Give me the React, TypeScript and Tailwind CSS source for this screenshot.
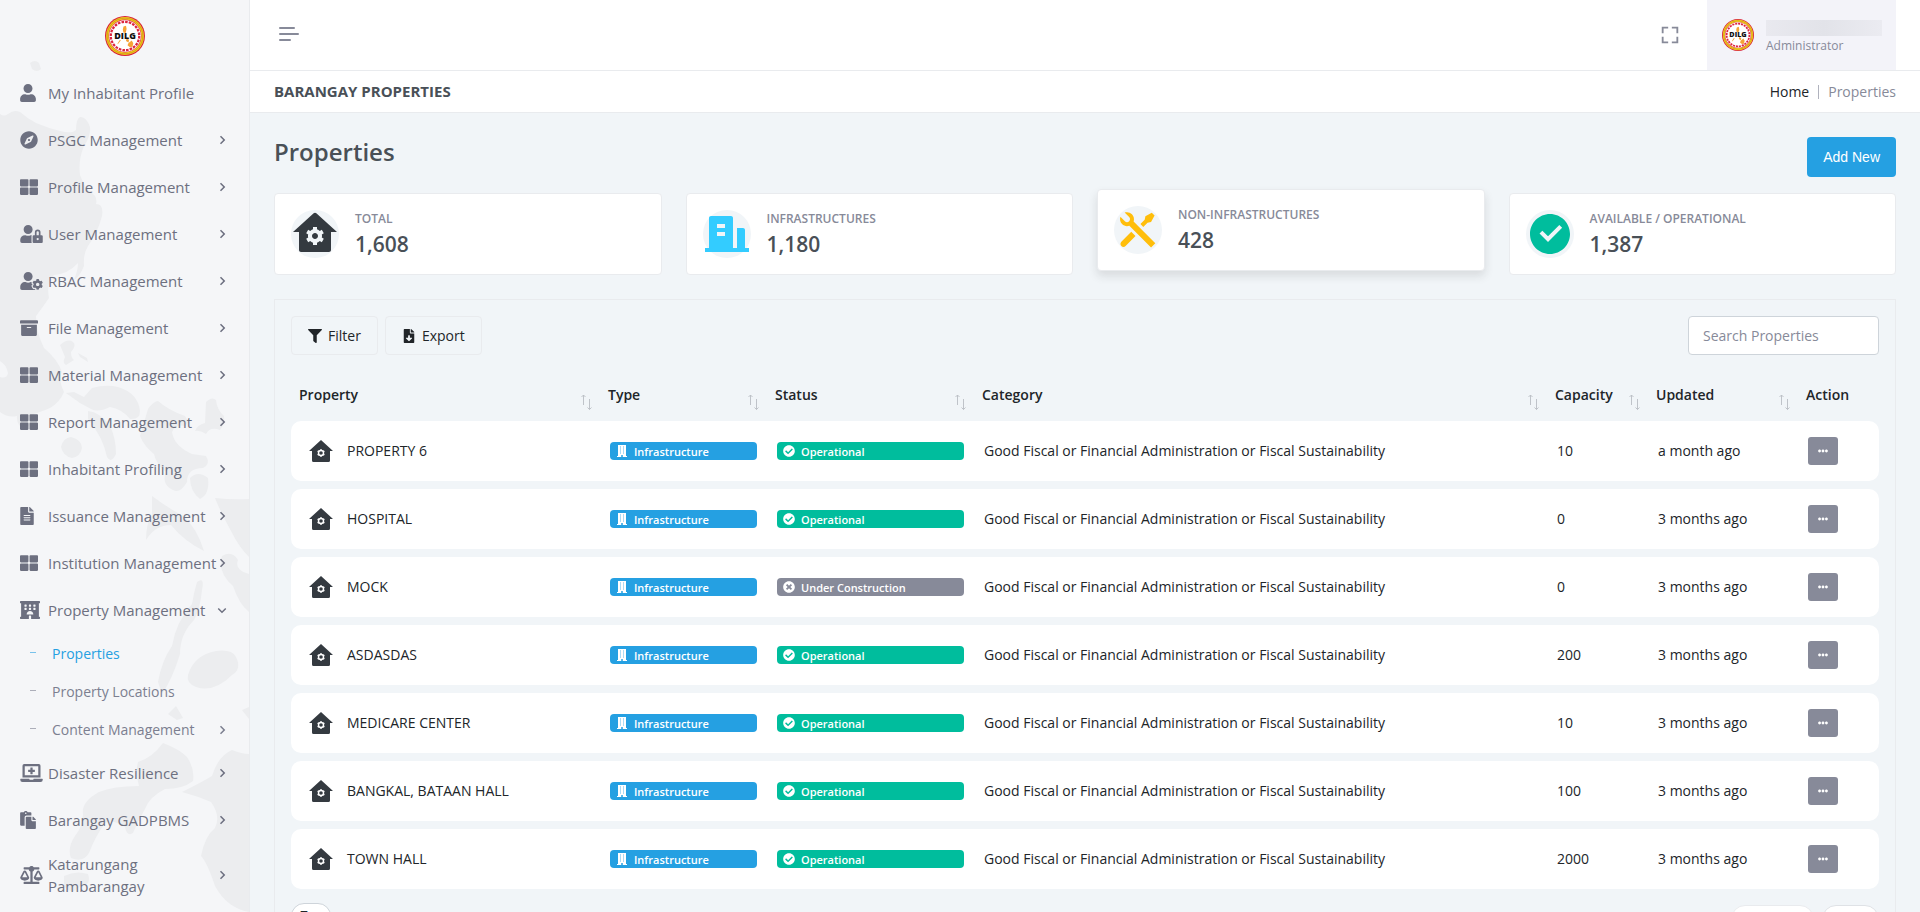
import type { ComponentType, ReactNode } from "react";
import {
  FaArchive,
  FaBalanceScale,
  FaCheckCircle,
  FaCompass,
  FaEllipsisH,
  FaFileAlt,
  FaFileDownload,
  FaFilter,
  FaHotel,
  FaLaptopMedical,
  FaPaste,
  FaThLarge,
  FaTimesCircle,
  FaUser,
  FaUserCog,
  FaUserLock,
} from "react-icons/fa";
import { BiChevronDown, BiChevronRight, BiFullscreen } from "react-icons/bi";
import { RiBuildingFill, RiCheckboxCircleFill, RiHomeGearFill, RiToolsFill } from "react-icons/ri";

type Icon = ComponentType<{ className?: string }>;

type MenuItem = { label: string; icon: Icon; size: string; arrow?: "right" | "down" };

const menuTop: MenuItem[] = [
  { label: "My Inhabitant Profile", icon: FaUser, size: "w-4" },
  { label: "PSGC Management", icon: FaCompass, size: "w-[18px]", arrow: "right" },
  { label: "Profile Management", icon: FaThLarge, size: "w-[18px]", arrow: "right" },
  { label: "User Management", icon: FaUserLock, size: "w-[23px]", arrow: "right" },
  { label: "RBAC Management", icon: FaUserCog, size: "w-[23px]", arrow: "right" },
  { label: "File Management", icon: FaArchive, size: "w-[18px]", arrow: "right" },
  { label: "Material Management", icon: FaThLarge, size: "w-[18px]", arrow: "right" },
  { label: "Report Management", icon: FaThLarge, size: "w-[18px]", arrow: "right" },
  { label: "Inhabitant Profiling", icon: FaThLarge, size: "w-[18px]", arrow: "right" },
  { label: "Issuance Management", icon: FaFileAlt, size: "w-3.5", arrow: "right" },
  { label: "Institution Management", icon: FaThLarge, size: "w-[18px]", arrow: "right" },
  { label: "Property Management", icon: FaHotel, size: "w-5", arrow: "down" },
];

const subMenu = [
  { label: "Properties", active: true, arrow: false },
  { label: "Property Locations", active: false, arrow: false },
  { label: "Content Management", active: false, arrow: true },
];

const menuBottom: MenuItem[] = [
  { label: "Disaster Resilience", icon: FaLaptopMedical, size: "w-[23px]", arrow: "right" },
  { label: "Barangay GADPBMS", icon: FaPaste, size: "w-4", arrow: "right" },
  { label: "Katarungang Pambarangay", icon: FaBalanceScale, size: "w-[23px]", arrow: "right" },
];

const stats = [
  { label: "TOTAL", value: "1,608", icon: RiHomeGearFill, color: "text-[#343a40]", raised: false },
  { label: "INFRASTRUCTURES", value: "1,180", icon: RiBuildingFill, color: "text-[#33ccff]", raised: false },
  { label: "NON-INFRASTRUCTURES", value: "428", icon: RiToolsFill, color: "text-[#ffbe0b]", raised: true },
  { label: "AVAILABLE / OPERATIONAL", value: "1,387", icon: RiCheckboxCircleFill, color: "text-[#00bd9d]", raised: false },
];

const columns = [
  { label: "Property", width: "w-[309px]", sortable: true },
  { label: "Type", width: "w-[167px]", sortable: true },
  { label: "Status", width: "w-[207px]", sortable: true },
  { label: "Category", width: "", sortable: true },
  { label: "Capacity", width: "w-[101px]", sortable: true },
  { label: "Updated", width: "w-[150px]", sortable: true },
  { label: "Action", width: "w-[81px]", sortable: false },
];

const category = "Good Fiscal or Financial Administration or Fiscal Sustainability";

const rows = [
  { name: "PROPERTY 6", operational: true, capacity: "10", updated: "a month ago" },
  { name: "HOSPITAL", operational: true, capacity: "0", updated: "3 months ago" },
  { name: "MOCK", operational: false, capacity: "0", updated: "3 months ago" },
  { name: "ASDASDAS", operational: true, capacity: "200", updated: "3 months ago" },
  { name: "MEDICARE CENTER", operational: true, capacity: "10", updated: "3 months ago" },
  { name: "BANGKAL, BATAAN HALL", operational: true, capacity: "100", updated: "3 months ago" },
  { name: "TOWN HALL", operational: true, capacity: "2000", updated: "3 months ago" },
];

function Seal({ className }: { className: string }) {
  return (
    <svg viewBox="0 0 40 40" className={className} role="img" aria-label="DILG">
      <circle cx="20" cy="20" r="20" fill="#d8203a" />
      <circle cx="20" cy="20" r="19" fill="#f2cc1f" />
      <circle cx="20" cy="20" r="17.9" fill="none" stroke="#c99a14" strokeWidth="0.8" />
      <circle cx="20" cy="20" r="16.4" fill="#e0314b" />
      <circle cx="20" cy="20" r="15.8" fill="#fff" />
      <circle cx="20" cy="20" r="14.2" fill="none" stroke="#dc2540" strokeWidth="2.2" strokeDasharray="2.6 1.1" />
      <path d="M18.500 10.500l2.500-.8.600 3.300-1 4-2.200-.6-.6-3zM16 24l-2.500 3.500-1.300.7 2.300-4zM21.500 22.500l2.600 1.200-.6 2.800-2.500-1.600zM23.500 27l3.200-2.500 1.600 2.700-.8 3.600-2.600.4-2.400-1.900z" fill="#f6a336" />
      <text x="20" y="23" textAnchor="middle" fontSize="9" fontWeight="800" fill="#111" fontFamily="'Open Sans', sans-serif">
        DILG
      </text>
    </svg>
  );
}

function MapBackdrop() {
  return (
    <svg viewBox="0 0 249 912" className="absolute left-0 top-0 h-[912px] w-[249px]" fill="#ecedef" aria-hidden="true">
      <path d="M30 63q5-4 9 0l2 6q-4 4-9 0z" />
      <path d="M0 114Q4 117 8 114Q14 109 20 112Q28 119 36 123Q48 128 60 131Q72 134 76 130Q76 119 80 117Q86 116 90 127Q91 136 84 146Q78 160 80 175Q84 186 90 192Q98 196 96 204Q104 204 102 216Q98 232 88 246Q83 254 84 266Q80 276 74 280Q78 270 78 263Q68 274 54 275Q46 282 49 298Q42 308 36 316Q36 332 44 348Q58 360 62 372Q58 380 64 392Q60 402 50 408Q40 412 34 414Q32 422 26 430Q16 426 17 416Q8 418 0 412V377Q7 379 8 373Q6 364 0 361Z" />
      <path d="M60 345q8-7 13-3 4 3-2 10 0 6 3 8l-8 5q-4-2-1-8zM78 353l9 5 1 4-8-5z" />
      <path d="M92 388q14-4 26-1 20 6 22 24 0 9-10 8-8-10-20-12-12 6-19 2l-11-6-14-10 8-1 10 5z" />
      <path d="M88 411q12 1 22 15 6 12 6 28-5 10-9 3-4-20-19-38zM61 447q2-9 10-10 11 3 11 11-2 9-10 10-9-2-11-11z" />
      <path d="M148 409q6-8 10-8 10 9 27 15 5 7 0 10-10-2-13 6 2 14 20 22l14 2q5 8-3 12-16 0-16 14-7 12-14 8-12-6-7-18-10-8-12-18-10-8-14-18z" />
      <path d="M206 402q6-6 10-2 1 10 8 16 1 8-4 14-10-4-14 4-6-4-11-3 2-6 10-8zM190 478q8-8 18 0 2 16-8 21-10-8-10-21z" />
      <path d="M152 496q16 12 31 20 14 12 21 35-20-10-33-26-16 0-25 15 0-16 6-26z" />
      <path d="M215 498q18 2 34 1v58q-10-10-18-26-10-18-16-33zM222 556q10-6 16 4-4 10 11 14v38q-10-8-16-26-16-14-11-30z" />
      <path d="M197 582q8-6 5 8-2 20-8 30-14 14-14 34-8 26-18 40l-4-12q4-22 14-36 4-24 20-42 2-12 5-22zM188 675q6-20 28-24 16-2 20 6 6 12-4 18-18 18-36 12-10-4-8-12zM168 714l8-8 7 12-6 2zM242 710l7-3v12z" />
      <path d="M138 762q14-4 25-19 16 6 24 14 8 12 6 24-10 8-28 8-16 8-20 20-8 14-12 24-6 4-8-6-12-8-20-4-10 14-16 30-6 10-18 5-4-10 4-22 8-10 8-22-2-12 16-22 14-6 40-6-4-14-1-24z" />
      <path d="M182 792q20-10 30-16 6-20 20-26 10 4 17 4v158q-22-4-34-26-8-24-14-30 4-20 14-28 6-12-4-26-14-6-29-10zM64 876q12-6 24-2 4 12-8 12-8 10-16 0z" />
    </svg>
  );
}

function Chevron({ direction }: { direction: "right" | "down" }) {
  return direction === "down" ? (
    <BiChevronDown className="size-[18px] shrink-0" />
  ) : (
    <BiChevronRight className="size-[18px] shrink-0" />
  );
}

function MenuRow({ item }: { item: MenuItem }) {
  const ItemIcon = item.icon;
  return (
    <li>
      <a href="#" className="flex min-h-[47px] items-center py-2.5 pl-5 pr-[18px] text-[#6d7080]">
        <span className="flex w-7 shrink-0">
          <ItemIcon className={`h-[18px] ${item.size}`} />
        </span>
        <span className="w-[165px] grow text-[15px] leading-[22px]">
          <span className={item.label.includes("Katarungang") ? "" : "whitespace-nowrap"}>{item.label}</span>
        </span>
        {item.arrow && <Chevron direction={item.arrow} />}
      </a>
    </li>
  );
}

function Sidebar() {
  return (
    <aside className="relative w-[250px] shrink-0 overflow-hidden border-r border-[#e9ebee] bg-[#f5f6f8]">
      <MapBackdrop />
      <div className="relative">
        <a href="#" className="flex h-[69px] items-center justify-center pt-0.5">
          <Seal className="size-10" />
        </a>
        <nav aria-label="Main">
          <ul>
            {menuTop.map((item) => (
              <MenuRow key={item.label} item={item} />
            ))}
            <li>
              <ul className="pt-0.5">
                {subMenu.map((item) => (
                  <li key={item.label}>
                    <a
                      href="#"
                      className={
                        item.active
                          ? "flex h-[38px] items-center pl-[30px] pr-[18px] text-sm text-[#25a0e2]"
                          : "flex h-[38px] items-center pl-[30px] pr-[18px] text-sm text-[#7c7f90]"
                      }
                    >
                      <span className="mb-1 mr-4 h-px w-1.5 bg-current opacity-60" />
                      <span className="grow">{item.label}</span>
                      {item.arrow && <Chevron direction="right" />}
                    </a>
                  </li>
                ))}
              </ul>
            </li>
            {menuBottom.map((item) => (
              <MenuRow key={item.label} item={item} />
            ))}
          </ul>
        </nav>
      </div>
    </aside>
  );
}

function Topbar() {
  return (
    <header className="flex h-[71px] items-center justify-between border-b border-[#e9ebee] bg-white px-6">
      <button type="button" aria-label="Toggle menu" className="flex flex-col gap-1 pb-0.5 pl-[5px]">
        <span className="h-0.5 w-4 rounded bg-[#878a99]" />
        <span className="h-0.5 w-5 rounded bg-[#878a99]" />
        <span className="h-0.5 w-3 rounded bg-[#878a99]" />
      </button>
      <div className="flex h-full items-center gap-[26px]">
        <button type="button" aria-label="Full screen" className="text-[#878a99]">
          <BiFullscreen className="size-[22px]" />
        </button>
        <button type="button" aria-label="Account" className="flex h-full w-[189px] items-center bg-[#f3f3f9] pl-[15px] text-left">
          <Seal className="size-8" />
          <span className="ml-3 flex flex-col pt-1.5">
            <span className="h-4 w-[116px] bg-gradient-to-r from-[#e9e9ef] via-[#e2e3e9] to-[#ebebf1]" />
            <span className="text-xs leading-5 text-[#878a99]">Administrator</span>
          </span>
        </button>
      </div>
    </header>
  );
}

function StatCard({ stat }: { stat: (typeof stats)[number] }) {
  const StatIcon = stat.icon;
  return (
    <article
      className={
        stat.raised
          ? "flex h-[82px] -translate-y-1 items-center rounded border border-[#e9ebee] bg-white px-4 shadow-[0_5px_10px_rgba(30,32,37,0.12)]"
          : "flex h-[82px] items-center rounded border border-[#e9ebee] bg-white px-4"
      }
    >
      <span className="flex size-12 items-center justify-center rounded-full bg-[#f1f5f8]">
        <StatIcon className={`size-12 ${stat.color}`} />
      </span>
      <div className="ml-4">
        <p className="text-xs font-semibold leading-[18px] text-[#878a99]">{stat.label}</p>
        <p className="pt-0.5 text-[21px] font-semibold leading-7 text-[#495057]">{stat.value}</p>
      </div>
    </article>
  );
}

function HouseIcon() {
  return (
    <svg viewBox="0 0 24 22" className="h-[22px] w-6 shrink-0 text-[#343a40]" aria-hidden="true">
      <path d="M12 0L24 11H21V20.500Q21 22 19.500 22H4.500Q3 22 3 20.500V11H0Z" fill="currentColor" />
      <g stroke="#fff" fill="none">
        <circle cx="12" cy="13" r="2.500" strokeWidth="1.400" />
        <path d="M12 9.200v1.200M12 15.600v1.200M8.700 11.100l1 .6M14.300 14.300l1 .6M8.700 14.900l1-.6M14.300 11.700l1-.6" strokeWidth="1.700" />
      </g>
    </svg>
  );
}

function BuildingIcon() {
  return (
    <svg viewBox="0 0 10 12" className="h-3 w-2.5" aria-hidden="true">
      <path d="M1 0H9V11H10V12H0V11H1Z" fill="#fff" />
      <path d="M3 1.500h1v1H3zM6 1.500h1v1H6zM3 3.500h1v1H3zM6 3.500h1v1H6zM3 5.500h1v1H3zM6 5.500h1v1H6zM3 7.500h1v1H3zM6 7.500h1v1H6zM4 10h2v2H4z" fill="#25a0e2" opacity="0.75" />
    </svg>
  );
}

function SortArrows() {
  return (
    <svg viewBox="0 0 12 18" className="absolute bottom-0.5 right-2 h-[18px] w-3 text-[#b9bdc3]" fill="none" stroke="currentColor" aria-hidden="true">
      <path d="M3.500 12V2M1.500 4l2-2 2 2M9.500 6v10.500M7.500 14.500l2 2 2-2" strokeWidth="0.9" />
    </svg>
  );
}

function Badge({ icon, color, children }: { icon: ReactNode; color: string; children: ReactNode }) {
  return (
    <span className={`flex h-[18px] items-center rounded px-1.5 text-[11px] font-semibold leading-none text-white ${color}`}>
      <span className="mr-1.5 flex w-3 justify-center text-xs">{icon}</span>
      {children}
    </span>
  );
}

function PropertyTable() {
  return (
    <table className="w-full table-fixed border-separate border-spacing-x-0 border-spacing-y-2 text-left text-sm text-[#212529]">
      <thead>
        <tr>
          {columns.map((column) => (
            <th key={column.label} scope="col" className={`relative h-[37px] px-2 font-semibold ${column.width}`}>
              {column.label}
              {column.sortable && <SortArrows />}
            </th>
          ))}
        </tr>
      </thead>
      <tbody>
        {rows.map((row) => (
          <tr key={row.name} className="h-[60px] bg-white">
            <td className="rounded-l-[10px] pl-[18px]">
              <span className="flex items-center gap-3.5">
                <HouseIcon />
                {row.name}
              </span>
            </td>
            <td className="px-2.5">
              <Badge color="bg-[#25a0e2]" icon={<BuildingIcon />}>
                Infrastructure
              </Badge>
            </td>
            <td className="px-2.5">
              {row.operational ? (
                <Badge color="bg-[#00bd9d]" icon={<FaCheckCircle />}>
                  Operational
                </Badge>
              ) : (
                <Badge color="bg-[#878a99]" icon={<FaTimesCircle />}>
                  Under Construction
                </Badge>
              )}
            </td>
            <td className="px-2.5">{category}</td>
            <td className="px-2.5">{row.capacity}</td>
            <td className="px-2.5">{row.updated}</td>
            <td className="rounded-r-[10px] px-2.5">
              <button
                type="button"
                aria-label={`Actions for ${row.name}`}
                className="flex h-7 w-[30px] items-center justify-center rounded-[3px] bg-[#878a99] text-[10px] text-white"
              >
                <FaEllipsisH />
              </button>
            </td>
          </tr>
        ))}
      </tbody>
    </table>
  );
}

export default function App() {
  return (
    <div className="flex h-screen overflow-hidden bg-[#f1f5f8] font-['Open_Sans',sans-serif] text-[#212529]">
      <Sidebar />
      <div className="min-w-0 grow">
        <Topbar />
        <div className="flex h-[42px] items-center justify-between border-b border-[#e9ebee] bg-white px-6">
          <h1 className="text-[15px] font-bold text-[#495057]">BARANGAY PROPERTIES</h1>
          <nav aria-label="Breadcrumb" className="flex items-center gap-[9px] text-sm text-[#878a99]">
            <a href="#" className="text-[#212529]">
              Home
            </a>
            <span className="h-3.5 w-px bg-[#b0b2bd]" />
            <span>Properties</span>
          </nav>
        </div>
        <main className="px-6 pt-6">
          <div className="flex h-14 items-start justify-between">
            <h2 className="text-2xl font-semibold leading-[30px] text-[#495057]">Properties</h2>
            <button type="button" className="h-10 rounded bg-[#25a0e2] px-4 font-['Liberation_Sans',sans-serif] text-sm text-white">
              Add New
            </button>
          </div>
          <section aria-label="Summary" className="grid grid-cols-4 gap-6">
            {stats.map((stat) => (
              <StatCard key={stat.label} stat={stat} />
            ))}
          </section>
          <section aria-label="Property list" className="mt-6 border border-[#e9ebee] px-4 py-4">
            <div className="mb-[13px] flex justify-between">
              <div className="flex gap-[7px] text-sm">
                <button type="button" className="flex h-[39px] items-center gap-1.5 rounded border border-[#e9ebee] px-4">
                  <FaFilter /> Filter
                </button>
                <button type="button" className="flex h-[39px] items-center gap-1.5 rounded border border-[#e9ebee] px-4">
                  <FaFileDownload /> Export
                </button>
              </div>
              <input
                type="text"
                aria-label="Search Properties"
                placeholder="Search Properties"
                className="h-[39px] w-[191px] rounded border border-[#ced4da] bg-white px-3.5 text-sm placeholder:text-[#878a99]"
              />
            </div>
            <PropertyTable />
            <div className="mt-1.5 flex items-start justify-between">
              <select aria-label="Rows per page" className="h-[26px] w-10 appearance-none rounded-[14px] border border-[#ced4da] bg-white px-2 text-sm">
                <option>7</option>
              </select>
              <div className="flex gap-2 pt-0.5 text-sm">
                <button type="button" className="h-9 w-[83px] rounded-[14px] border border-[#e9ebee] bg-white text-[#878a99]">
                  Previous
                </button>
                <button type="button" className="h-9 w-[57px] rounded-[14px] border border-[#dfe2e6] bg-white">
                  Next
                </button>
              </div>
            </div>
          </section>
        </main>
      </div>
    </div>
  );
}
